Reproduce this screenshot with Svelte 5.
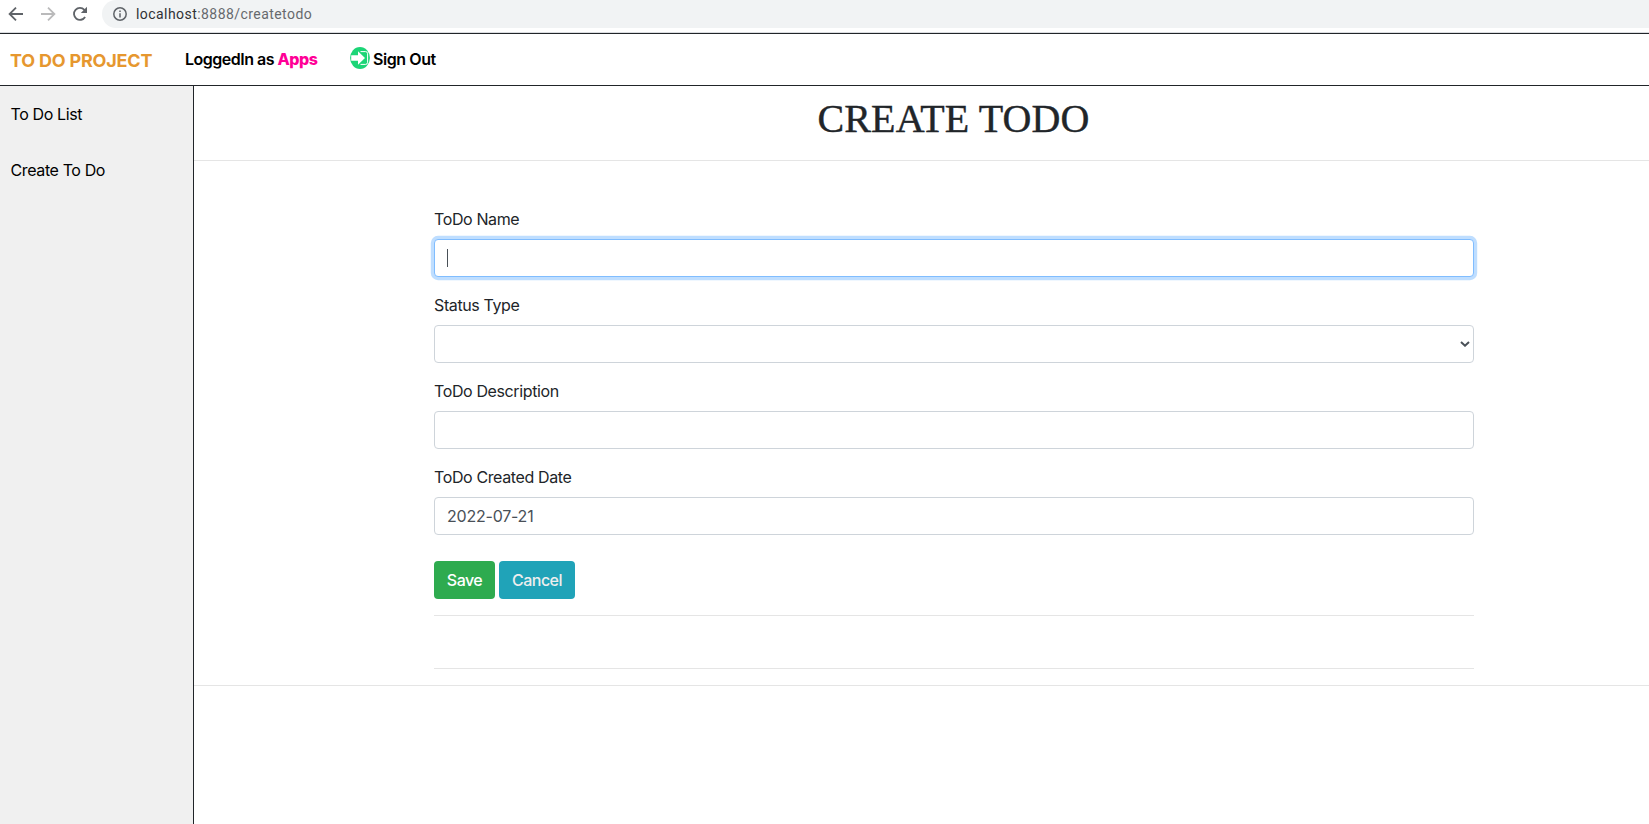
<script>
  let name = $state('');
  let status = $state('');
  let description = $state('');
  let created = $state('2022-07-21');
</script>

<div class="page">
  <div class="browser">
    <svg class="nav-icon" viewBox="0 0 16 16"><path d="M15 8H2M8 1.6 1.6 8 8 14.4" /></svg>
    <svg class="nav-icon faded" viewBox="0 0 16 16"><path d="M1 8h13M8 1.6 14.4 8 8 14.4" /></svg>
    <svg class="nav-icon" viewBox="0 0 16 16">
      <path d="M13.1 11A6 6 0 1 1 12.4 3.8L14 5.4" />
      <path class="solid" d="M15 .8V7H8.8Z" />
    </svg>
    <div class="address">
      <svg viewBox="0 0 14 14"><circle cx="7" cy="7" r="6.2" /><path d="M7 6.2v4.2M7 3.4v1.5" /></svg>
      <span class="url"><b>localhost</b>:8888/createtodo</span>
    </div>
  </div>

  <header>
    <span class="brand">TO DO PROJECT</span>
    <span class="logged">LoggedIn as <strong>Apps</strong></span>
    <span class="signout">
      <svg viewBox="0 0 20 22">
        <ellipse cx="10" cy="11" rx="9.9" ry="10.9" fill="#1bd576" />
        <path d="M1.2 8.3H8V4.3L15 11 8 17.7V13.7H1.2Z" fill="#fff" />
        <path d="M10.5 4.6h5q2.1 0 2.1 2.1v8.6q0 2.1-2.1 2.1h-5" fill="none" stroke="#fff" stroke-width="1" />
      </svg>
      <span>Sign Out</span>
    </span>
  </header>

  <div class="body">
    <nav>
      <span class="list">To Do List</span>
      <span class="create">Create To Do</span>
    </nav>
    <main>
      <h1>CREATE TODO</h1>
      <form>
        <label for="name">ToDo Name</label>
        <div class="field focused"><i class="caret"></i><input id="name" bind:value={name} /></div>
        <label for="status">Status Type</label>
        <div class="field">
          <select id="status" bind:value={status}><option value=""></option></select>
          <svg class="chevron" viewBox="0 0 10 6"><path d="M1 1l4 3.7L9 1" /></svg>
        </div>
        <label for="desc">ToDo Description</label>
        <div class="field"><input id="desc" bind:value={description} /></div>
        <label for="date">ToDo Created Date</label>
        <div class="field"><input id="date" bind:value={created} /></div>
        <div class="actions">
          <button type="button" class="save">Save</button>
          <button type="button" class="cancel">Cancel</button>
        </div>
        <div class="messages"></div>
      </form>
    </main>
  </div>
</div>

<style>
  :global(body) { margin: 0; background: #fff; }
  .page {
    width: 1649px; height: 824px; overflow: hidden;
    display: flex; flex-direction: column;
    font: 16px/24px Inter, sans-serif; letter-spacing: -0.38px; color: #212529;
  }
  .page * { box-sizing: border-box; }
  .browser {
    height: 33px; flex: none; display: flex; align-items: flex-start;
    border-bottom: 1px solid #dadce0; padding-left: 8px;
  }
  .nav-icon {
    width: 16px; height: 16px; margin: 6px 16px 0 0; flex: none;
    fill: none; stroke: #5f6368; stroke-width: 1.8;
  }
  .nav-icon.faded { stroke: #bababb; }
  .nav-icon .solid { fill: #5f6368; stroke: none; }
  .address {
    flex: 1; height: 28px; margin-left: -2px; padding-left: 11px;
    background: #f1f3f4; border-radius: 14px 0 0 14px;
    display: flex; align-items: center; gap: 9px;
  }
  .address svg { width: 14px; height: 14px; fill: none; stroke: #5f6368; stroke-width: 1.5; }
  .url { font: 14px/20px Roboto, sans-serif; letter-spacing: 0.44px; color: #66696d; }
  .url b { font-weight: 400; color: #303134; }
  header {
    height: 53px; flex: none; display: flex; align-items: center;
    border: solid #212529; border-width: 1px 0; padding-left: 10px;
    font-weight: 600; color: #000; letter-spacing: -0.42px;
  }
  .brand {
    width: 175px; padding-top: 3px;
    font-size: 18px; font-weight: 700; letter-spacing: -0.2px; color: #e6972f;
  }
  .logged { width: 165px; padding-bottom: 2px; letter-spacing: -0.5px; }
  .logged strong { color: #ff0096; font-weight: 800; }
  .signout { display: flex; align-items: center; gap: 3px; padding-bottom: 2px; }
  .signout svg { width: 20px; height: 22px; margin-top: -1px; }
  .body { flex: 1; display: flex; min-height: 0; }
  nav {
    width: 194px; flex: none; background: #f0f0f0; border-right: 1px solid #212529;
    padding: 16px 10.5px; display: flex; flex-direction: column; gap: 32px; color: #000;
  }
  main { flex: 1; }
  h1 {
    margin: 0; height: 75px; padding: 9px 0 0 64px; border-bottom: 1px solid #e5e5e5;
    text-align: center; font: 400 40px/48px "Liberation Serif", serif;
    letter-spacing: 0.1px; -webkit-text-stroke: 0.4px #212529;
  }
  form { height: 525px; padding: 46px 175px 0 240px; border-bottom: 1px solid #e5e5e5; }
  label { display: block; height: 24px; margin-bottom: 8px; }
  .field {
    height: 38px; margin-bottom: 16px; padding: 0 12px; display: flex; align-items: center;
    border: 1px solid #ced4da; border-radius: 4px; background: #fff;
  }
  .field.focused { border-color: #80bdff; box-shadow: 0 0 0 3.2px #bfdeff; }
  .caret { width: 1px; height: 18px; background: #495057; }
  input, select {
    flex: 1; min-width: 0; border: 0; padding: 0; outline: 0; appearance: none;
    background: none; font: inherit; letter-spacing: -0.22px; color: #495057;
  }
  .chevron { width: 10px; height: 6px; margin-right: -9px; fill: none; stroke: #495057; stroke-width: 2; }
  .actions { display: flex; gap: 4px; padding-top: 10px; }
  button {
    height: 38px; border: 0; border-radius: 4px; padding: 0;
    font: 16px/24px Inter, sans-serif; font-weight: 500; letter-spacing: -0.55px; color: #fff;
  }
  .save { width: 61px; background: #2eab4f; }
  .cancel { width: 76px; background: #20a3b8; color: #eee; }
  .messages { height: 54px; margin-top: 16px; border: solid #e5e5e5; border-width: 1px 0; }
</style>
